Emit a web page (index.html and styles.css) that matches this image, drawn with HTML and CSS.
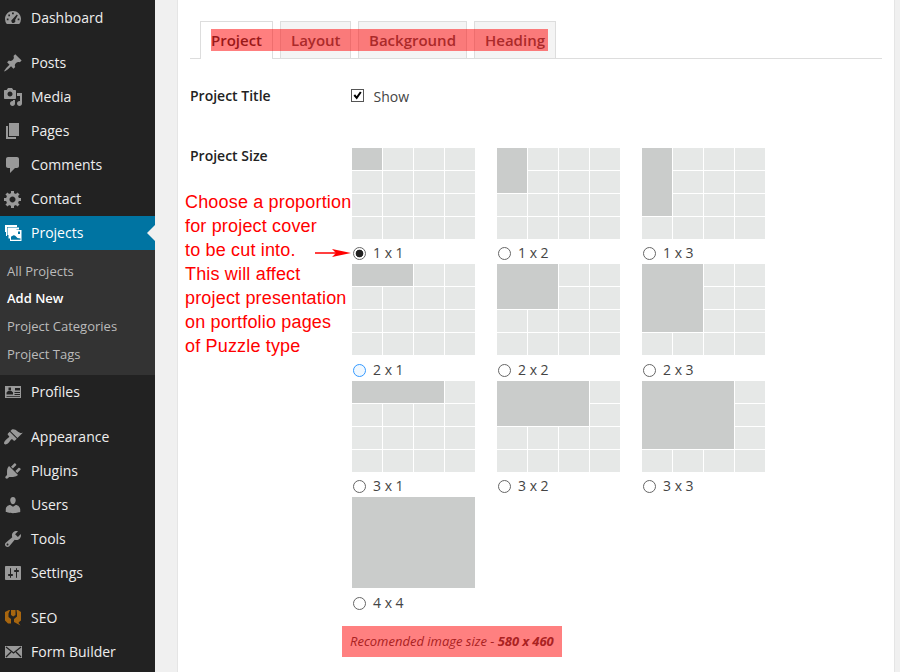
FILE: index.html
```html
<!DOCTYPE html>
<html lang="en">
<head>
<meta charset="utf-8">
<title>Add New Project</title>
<link rel="stylesheet" href="styles.css">
</head>
<body>
<div class="app">
  <nav class="menu">
    <a class="item"><svg class="icon" viewBox="0 0 20 20"><path fill-rule="evenodd" d="M3.76 16h12.48A8 8 0 0 0 18 11c0-4.6-3.6-8-8-8s-8 3.400-8 8a8 8 0 0 0 1.760 5zM9 4.500h1.800v1.800H9zM5.300 6.500h1.700v1.700H5.300zM13.800 6.500l1 .8-2.700 4.700a2 2 0 1 1-2.600-.8zM3.800 10.500h1.700v1.700h-1.700zM14.700 10.500h1.700v1.700h-1.700z"/></svg>Dashboard</a>
    <div class="separator"></div>
    <a class="item"><svg class="icon" viewBox="0 0 20 20"><path d="M10.44 3.02l1.82-1.82 6.36 6.35-1.83 1.82c-1.05-.68-2.48-.57-3.41.36l-.75.75c-.92.93-1.04 2.35-.35 3.41l-1.83 1.82-2.41-2.41-2.8 2.79c-.42.42-3.38 2.71-3.8 2.29s1.86-3.39 2.28-3.81l2.79-2.79L4.1 9.36l1.83-1.82c1.05.69 2.48.57 3.4-.36l.75-.75c.93-.92 1.05-2.35.36-3.41z"/></svg>Posts</a>
    <a class="item"><svg class="icon" viewBox="0 0 20 20"><path d="M13 11V4c0-.55-.45-1-1-1h-1.67L9 1H5L3.67 3H2c-.55 0-1 .45-1 1v7c0 .55.45 1 1 1h10c.55 0 1-.45 1-1zM7 4.500c1.380 0 2.500 1.120 2.500 2.500S8.380 9.500 7 9.500 4.500 8.380 4.500 7 5.620 4.500 7 4.500zM14 6h5v10.500c0 1.380-1.120 2.500-2.500 2.500S14 17.880 14 16.500s1.120-2.500 2.500-2.500c.17 0 .34.02.5.05V9h-3V6zm-4 8.050V13h2v3.500c0 1.380-1.120 2.500-2.500 2.500S7 17.880 7 16.500 8.120 14 9.500 14c.17 0 .34.02.5.05z"/></svg>Media</a>
    <a class="item"><svg class="icon" viewBox="0 0 20 20"><path d="M6 15V2h10v13H6zm-1 1h8v2H3V5h2v11z"/></svg>Pages</a>
    <a class="item"><svg class="icon" viewBox="0 0 20 20"><path d="M5 2h9c1.100 0 2 .9 2 2v7c0 1.100-.9 2-2 2h-2l-5 5v-5H5c-1.100 0-2-.9-2-2V4c0-1.100.9-2 2-2z"/></svg>Comments</a>
    <a class="item"><svg class="icon" viewBox="0 0 20 20"><path d="M18 12h-2.180c-.17.7-.44 1.350-.81 1.930l1.540 1.540-2.100 2.100-1.540-1.540c-.58.36-1.230.63-1.910.79V19H8v-2.180c-.68-.16-1.330-.43-1.910-.79l-1.540 1.540-2.120-2.120 1.540-1.540c-.36-.58-.63-1.230-.79-1.910H1V9.030h2.170c.16-.7.44-1.350.8-1.940L2.430 5.550l2.100-2.100 1.540 1.540c.58-.37 1.240-.64 1.930-.81V2h3v2.180c.68.16 1.330.43 1.910.79l1.540-1.540 2.120 2.120-1.540 1.540c.36.59.64 1.240.8 1.940H18V12zm-8.500 1.500c1.660 0 3-1.340 3-3s-1.340-3-3-3-3 1.340-3 3 1.340 3 3 3z"/></svg>Contact</a>
    <a class="item current"><svg class="icon" viewBox="0 0 20 20"><path d="M2 2h12v2H4v9H3V9H2zM4.500 4.500H16v2H7v9H5.500V12h-1z"/><path fill-rule="evenodd" d="M7 7h11.500v11H7zM8 16.800h9.500v-1.300l-3-.5-2.500-2.500-2-.5-2 1.500zM14.500 8.500h2.500v2.500h-2.500z"/><path d="M6 5h6l3 3v5l-4-1-4 2z"/></svg>Projects</a>
    <div class="submenu">
      <a>All Projects</a>
      <a class="active">Add New</a>
      <a>Project Categories</a>
      <a>Project Tags</a>
    </div>
    <a class="item"><svg class="icon" viewBox="0 0 20 20"><path fill-rule="evenodd" d="M2 4h16v12H2zM3.500 12.500h6.500v-2l-1.500-1.500h-3.500l-1.500 1.500zM5.500 5.500h2.500v3h-2.500zM12 6h5v2.500h-5zM11.500 10h5.500v1h-5.500zM11.500 12h5.500v1h-5.500zM3.500 14h13.500v.8h-13.500z"/></svg>Profiles</a>
    <div class="separator"></div>
    <a class="item"><svg class="icon" viewBox="0 0 20 20"><path d="M14.480 11.060L7.410 3.990l1.500-1.500c.5-.56 2.300-.47 3.510.32 1.210.8 1.430 1.280 2.910 2.100 1.180.64 2.450 1.260 4.450.85zm-.71.71L6.700 4.700 4.930 6.470c-.39.39-.39 1.020 0 1.410l1.060 1.060c.39.39.39 1.030 0 1.420-.6.6-1.430 1.110-2.210 1.690-.35.26-.7.53-1.010.84C1.430 14.230.4 16.080 1.400 17.070c.99 1 2.840-.03 4.180-1.360.31-.31.58-.66.85-1.020.57-.78 1.080-1.610 1.690-2.210.39-.39 1.020-.39 1.410 0l1.060 1.060c.39.39 1.020.39 1.410 0z"/></svg>Appearance</a>
    <a class="item"><svg class="icon" viewBox="0 0 20 20"><path d="M13.110 4.360L9.870 7.600 8 5.730l3.240-3.240c.35-.34 1.050-.2 1.560.32.52.51.66 1.210.31 1.550zm-8 1.770l.91-1.120 9.010 9.010-1.190.84c-.71.71-2.630 1.160-3.820 1.160H6.140L4.900 17.260c-.59.59-1.540.59-2.120 0-.59-.58-.59-1.530 0-2.120l1.240-1.240v-3.880c0-1.130.4-3.190 1.090-3.890zm7.260 3.970l3.240-3.240c.34-.35 1.040-.21 1.550.31.52.51.66 1.210.31 1.550l-3.240 3.250z"/></svg>Plugins</a>
    <a class="item"><svg class="icon" viewBox="0 0 20 20"><path d="M10 9.250c-2.270 0-2.730-3.440-2.730-3.440C7 4.020 7.820 2 9.970 2c2.160 0 2.980 2.020 2.710 3.810 0 0-.41 3.440-2.680 3.440zm0 2.570L12.720 10c2.390 0 4.520 2.330 4.520 4.530v2.490s-3.650 1.130-7.240 1.130c-3.650 0-7.240-1.130-7.240-1.130v-2.490c0-2.250 1.940-4.480 4.470-4.480z"/></svg>Users</a>
    <a class="item"><svg class="icon" viewBox="0 0 20 20"><path d="M16.680 9.770c-1.340 1.340-3.300 1.670-4.950.99l-5.410 6.520c-.99.99-2.590.99-3.580 0s-.99-2.590 0-3.570l6.520-5.420c-.68-1.650-.35-3.610.99-4.950 1.280-1.280 3.120-1.620 4.720-1.060l-2.890 2.890 2.820 2.820 2.860-2.870c.53 1.580.18 3.390-1.080 4.650zM3.810 16.210c.4.39 1.040.39 1.430 0 .4-.4.4-1.040 0-1.430-.39-.4-1.030-.4-1.430 0-.39.39-.39 1.030 0 1.430z"/></svg>Tools</a>
    <a class="item"><svg class="icon" viewBox="0 0 20 20"><path d="M18 16V4c0-.55-.45-1-1-1H3c-.55 0-1 .45-1 1v12c0 .55.45 1 1 1h14c.55 0 1-.45 1-1zM8 11h1c.55 0 1 .45 1 1s-.45 1-1 1H8v1.500c0 .28-.22.5-.5.5s-.5-.22-.5-.5V13H6c-.55 0-1-.45-1-1s.45-1 1-1h1V5.500c0-.28.22-.5.5-.5s.5.22.5.5V11zm5-2h-1c-.55 0-1-.45-1-1s.45-1 1-1h1V5.500c0-.28.22-.5.5-.5s.5.22.5.5V7h1c.55 0 1 .45 1 1s-.45 1-1 1h-1v5.500c0 .28-.22.5-.5.5s-.5-.22-.5-.5V9z"/></svg>Settings</a>
    <div class="separator"></div>
    <a class="item"><svg class="icon seo" viewBox="0 0 20 20"><path d="M2 4l4-2h1L5.500 5.500V9L8 11v4.500H5L2 12.500zM8 2h4.500v5L10.200 8.500 8 7zM13.500 2H15l3 2v8.500l-2 1.500-.5 1 2 2.500L11 14v-3l3-2.500v-3z"/></svg>SEO</a>
    <a class="item"><svg class="icon" viewBox="0 0 20 20"><path d="M2 4h17v12H2z"/><path class="fold" d="M3 5l7.500 6L18 5M3 15l5-5M18 15l-5-5"/></svg>Form Builder</a>
  </nav>
  <main class="panel">
    <div class="tabs">
      <a class="tab selected">Project</a>
      <a class="tab layout">Layout</a>
      <a class="tab background">Background</a>
      <a class="tab heading">Heading</a>
      <div class="highlight"></div>
    </div>
    <div class="row title-row">
      <div class="name">Project Title</div>
      <label class="show"><span class="checkbox"><svg viewBox="0 0 11 11"><path d="M2.300 5l2.400 2.800L8.800 2"/></svg></span>Show</label>
    </div>
    <div class="row size-row">
      <div class="name">Project Size
        <div class="callout">Choose a proportion<br>for project cover<br>to be cut into.<br>This will affect<br>project presentation<br>on portfolio pages<br>of Puzzle type
          <svg class="arrow" viewBox="0 0 36 10"><path class="shaft" d="M0 5h24"/><path d="M17 1l19 4-19 4 4-4z"/></svg>
        </div>
      </div>
      <div class="sizes" id="sizes"></div>
    </div>
    <div class="note">Recomended image size - <b>580 x 460</b></div>
  </main>
</div>
<script src="sizes.js"></script>
</body>
</html>
```
FILE: styles.css
```css
* { box-sizing: border-box; }
body {
  margin: 0;
  background: #f0f0f0;
  font: 14px/18px "Open Sans", sans-serif;
  color: #444;
}
.app { display: flex; width: 900px; height: 672px; overflow: hidden; }

.menu { width: 155px; padding-top: 1px; background: #222; flex: none; }
.item {
  display: flex;
  align-items: center;
  gap: 8px;
  height: 34px;
  padding-left: 3px;
  color: #eee;
  position: relative;
}
.icon { width: 20px; height: 20px; fill: #999; flex: none; }
.seo { fill: #a8660f; }
.fold { fill: none; stroke: #222; stroke-width: 1.3; }
.separator { height: 11px; }
.current { background: #0074a2; color: #fff; }
.current .icon { fill: #fff; }
.current::after {
  content: "";
  position: absolute;
  right: 0;
  top: 9px;
  border: 8px solid transparent;
  border-left: 0;
  border-right-color: #f0f0f0;
}
.submenu { height: 125px; padding: 7px; background: #333; font-size: 13px; }
.submenu a { display: block; height: 28px; line-height: 28px; color: #bbb; }
.submenu .active { height: 27px; line-height: 26px; color: #fff; font-weight: 600; }

.panel {
  width: 718px;
  margin-left: 22px;
  padding: 21px 12px 0;
  background: #fff;
  border: solid #e5e5e5;
  border-width: 0 1px;
  flex: none;
}
.tabs {
  position: relative;
  display: flex;
  gap: 7px;
  height: 38px;
  padding-left: 10px;
  border-bottom: 1px solid #ddd;
}
.tab {
  height: 37px;
  width: 73px;
  padding-left: 10px;
  border: 1px solid #ddd;
  border-bottom: 0;
  background: #f4f4f4;
  color: #555;
  font-size: 15px;
  font-weight: 600;
  line-height: 37px;
}
.tab.selected { height: 38px; background: #fff; color: #333; }
.layout { width: 71px; }
.background { width: 109px; }
.heading { width: 82px; }
.highlight {
  position: absolute;
  left: 21px;
  top: 8px;
  width: 337px;
  height: 22px;
  background: rgba(255, 0, 0, .5);
}
.row { display: flex; }
.name { width: 162px; color: #222; font-weight: 600; flex: none; position: relative; }
.title-row { padding-top: 28px; height: 89px; }
.title-row .name { width: 161px; }
.show { display: flex; align-items: center; height: 20px; gap: 9.5px; }
.checkbox { width: 13px; height: 13px; border: 1px solid #555; margin-top: -3px; display: flex; }
.checkbox svg { width: 11px; height: 11px; fill: none; stroke: #000; stroke-width: 2; }
.size-row .name { margin-top: -1px; }
.sizes {
  display: grid;
  grid-template-columns: repeat(3, 145px);
  grid-template-rows: 116px 117px 116px 117px;
}
.preview {
  display: grid;
  grid-template-columns: repeat(4, 30px);
  grid-template-rows: repeat(4, 22px);
  gap: 1px;
}
.preview i { background: #e6e8e7; }
.preview .chosen { background: #cacccb; grid-row-start: 1; grid-column-start: 1; }
.choice { display: flex; align-items: center; gap: 7px; height: 20px; margin-top: 4px; padding-left: 1px; }
.radio {
  width: 13px;
  height: 13px;
  border: 1px solid #666;
  border-radius: 50%;
  background: #fff;
}
.radio.on { background: radial-gradient(circle, #222 3.5px, #fff 4.200px); }
.radio.hover { border-color: #3399ff; background: #f0f8ff; }
.sizes > :nth-child(n+4):nth-child(-n+6) .choice { margin-top: 5px; }
.sizes > :nth-child(10) .choice { margin-top: 5px; }
.callout {
  position: absolute;
  left: -5px;
  top: 43px;
  font: 18px/24px "Liberation Sans", Arial, sans-serif;
  letter-spacing: .17px;
  color: #f00;
  white-space: nowrap;
}
.arrow { position: absolute; left: 130px; top: 58px; width: 36px; height: 10px; fill: #f00; }
.shaft { stroke: #f00; stroke-width: 1.5; }
.note {
  width: 220px;
  height: 31px;
  margin: 12px 0 0 152px;
  padding-left: 8px;
  background: #ff8080;
  color: #a22;
  font-size: 13px;
  font-style: italic;
  line-height: 30px;
  white-space: nowrap;
}
.note b { font-weight: 700; letter-spacing: -.1px; }
```
FILE: sizes.js
```js
const sizes = [[1, 1], [1, 2], [1, 3], [2, 1], [2, 2], [2, 3], [3, 1], [3, 2], [3, 3], [4, 4]];
document.getElementById("sizes").innerHTML = sizes.map(([w, h]) => {
  const state = w === 1 && h === 1 ? " on" : w === 2 && h === 1 ? " hover" : "";
  const cells = "<i></i>".repeat(16 - w * h);
  return `<div><div class="preview"><i class="chosen" style="grid-column-end:span ${w};grid-row-end:span ${h}"></i>${cells}</div>` +
    `<div class="choice"><span class="radio${state}"></span>${w} x ${h}</div></div>`;
}).join("");
```
